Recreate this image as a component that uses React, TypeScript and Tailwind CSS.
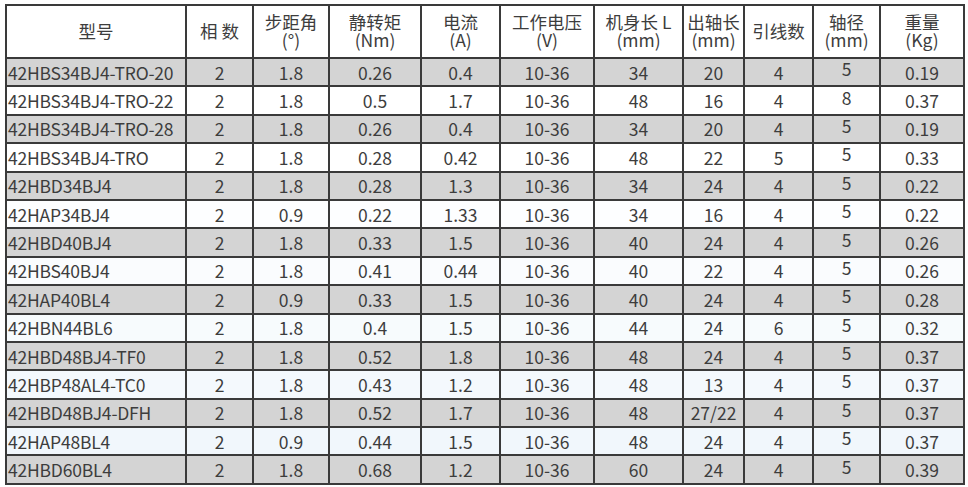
import React from 'react';

const cols = [180, 67, 76, 92, 79, 94, 89, 61, 69, 67, 84];

const headers: [string, string?][] = [
  ['型号'],
  ['相 数'],
  ['步距角', '(°)'],
  ['静转矩', '(Nm)'],
  ['电流', '(A)'],
  ['工作电压', '(V)'],
  ['机身长 L', '(mm)'],
  ['出轴长', '(mm)'],
  ['引线数'],
  ['轴径', '(mm)'],
  ['重量', '(Kg)'],
];

const rows: string[][] = [
  ['42HBS34BJ4-TRO-20', '2', '1.8', '0.26', '0.4', '10-36', '34', '20', '4', '5', '0.19'],
  ['42HBS34BJ4-TRO-22', '2', '1.8', '0.5', '1.7', '10-36', '48', '16', '4', '8', '0.37'],
  ['42HBS34BJ4-TRO-28', '2', '1.8', '0.26', '0.4', '10-36', '34', '20', '4', '5', '0.19'],
  ['42HBS34BJ4-TRO', '2', '1.8', '0.28', '0.42', '10-36', '48', '22', '5', '5', '0.33'],
  ['42HBD34BJ4', '2', '1.8', '0.28', '1.3', '10-36', '34', '24', '4', '5', '0.22'],
  ['42HAP34BJ4', '2', '0.9', '0.22', '1.33', '10-36', '34', '16', '4', '5', '0.22'],
  ['42HBD40BJ4', '2', '1.8', '0.33', '1.5', '10-36', '40', '24', '4', '5', '0.26'],
  ['42HBS40BJ4', '2', '1.8', '0.41', '0.44', '10-36', '40', '22', '4', '5', '0.26'],
  ['42HAP40BL4', '2', '0.9', '0.33', '1.5', '10-36', '40', '24', '4', '5', '0.28'],
  ['42HBN44BL6', '2', '1.8', '0.4', '1.5', '10-36', '44', '24', '6', '5', '0.32'],
  ['42HBD48BJ4-TF0', '2', '1.8', '0.52', '1.8', '10-36', '48', '24', '4', '5', '0.37'],
  ['42HBP48AL4-TC0', '2', '1.8', '0.43', '1.2', '10-36', '48', '13', '4', '5', '0.37'],
  ['42HBD48BJ4-DFH', '2', '1.8', '0.52', '1.7', '10-36', '48', '27/22', '4', '5', '0.37'],
  ['42HAP48BL4', '2', '0.9', '0.44', '1.5', '10-36', '48', '24', '4', '5', '0.37'],
  ['42HBD60BL4', '2', '1.8', '0.68', '1.2', '10-36', '60', '24', '4', '5', '0.39'],
];

// light rows drift from white towards a pale blue further down
const lightBg = [
  'bg-white',
  'bg-white',
  'bg-[#fdfeff]',
  'bg-[#fafcfe]',
  'bg-[#f7fbfd]',
  'bg-[#f4f9fd]',
  'bg-[#f1f7fc]',
  'bg-[#eff6fb]',
];

export default function App() {
  return (
    <div
      className="w-[968px] h-[487px] bg-white pt-[4px] pl-[5px] text-[#3d3d3d]"
      style={{ fontFamily: '"Noto Sans CJK SC", "Noto Sans", sans-serif' }}
    >
      <table className="table-fixed border-collapse w-[958px] text-[17.5px]">
        <colgroup>
          {cols.map((w, i) => (
            <col key={i} style={{ width: w }} />
          ))}
        </colgroup>
        <thead>
          <tr className="h-[53px] bg-white">
            {headers.map(([a, b], i) => (
              <th
                key={i}
                className="border-2 border-[#3a3a3a] font-normal text-center leading-[18px] px-0 pb-[2px] whitespace-nowrap"
              >
                <div>{a}</div>
                {b && <div>{b}</div>}
              </th>
            ))}
          </tr>
        </thead>
        <tbody>
          {rows.map((r, ri) => (
            <tr
              key={ri}
              className={`h-[28.4px] ${ri % 2 === 0 ? 'bg-[#d4d4d4]' : lightBg[Math.floor(ri / 2)]}`}
            >
              {r.map((c, ci) => (
                <td
                  key={ci}
                  className={`border-2 border-[#3a3a3a] leading-[20px] py-0 whitespace-nowrap ${
                    ci === 0 ? 'text-left pl-[1px] tracking-[-0.2px]' : 'text-center'
                  } ${ci === 9 ? 'pb-[6px]' : 'pt-[1px]'}`}
                >
                  {c}
                </td>
              ))}
            </tr>
          ))}
        </tbody>
      </table>
    </div>
  );
}
